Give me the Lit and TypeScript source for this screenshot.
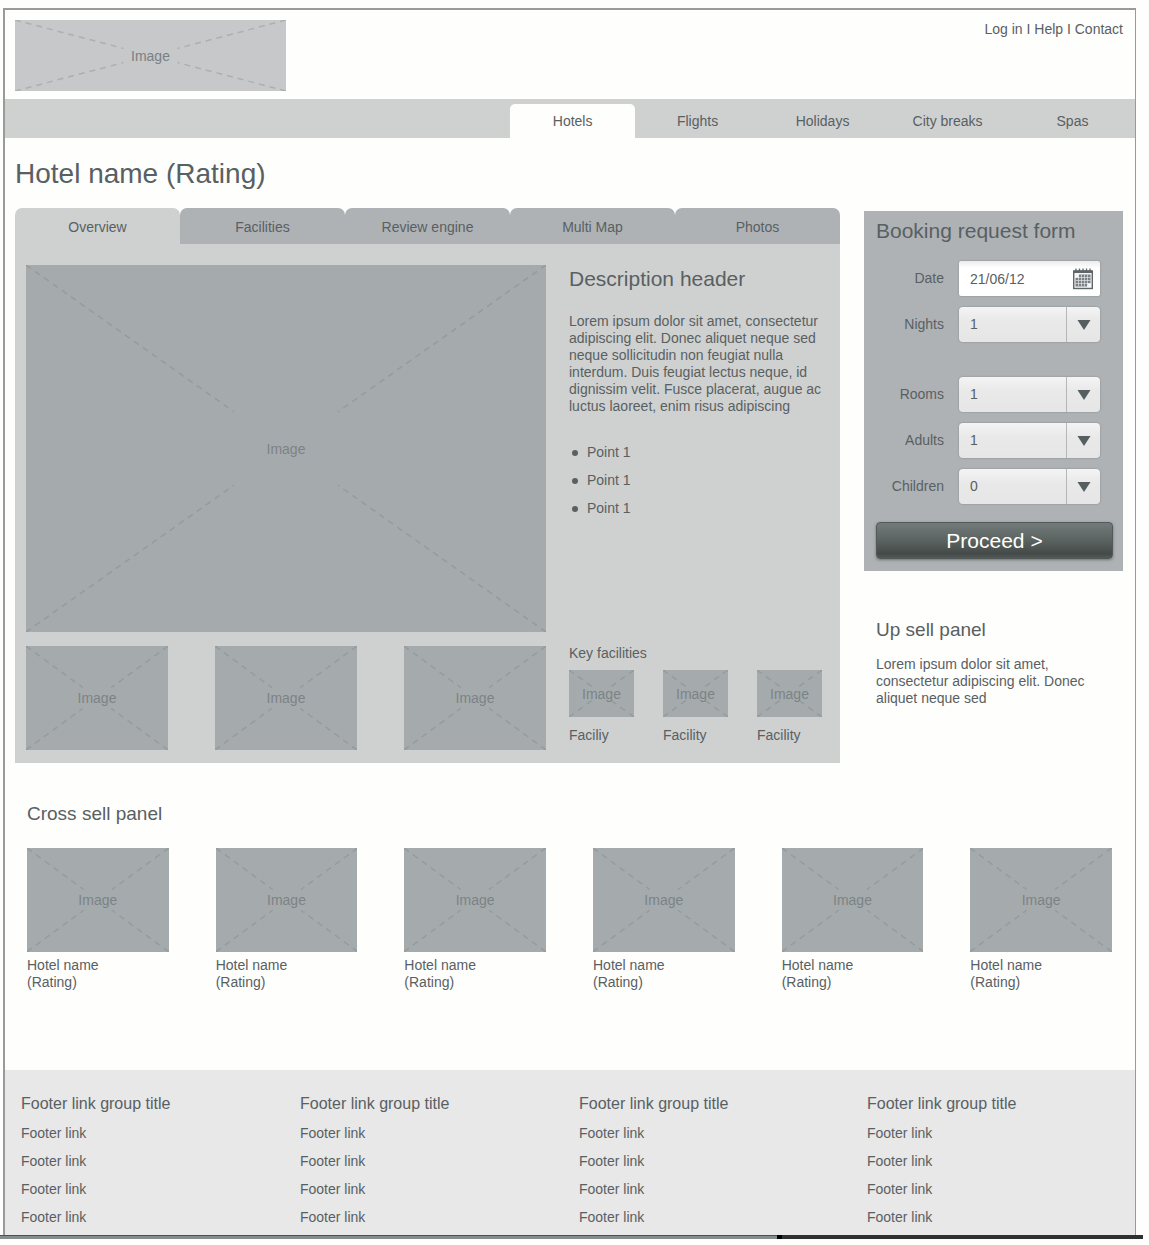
import { LitElement, html, css, svg } from "lit";
import { customElement, property } from "lit/decorators.js";
import { classMap } from "lit/directives/class-map.js";

/** Image placeholder: a flat box crossed by dashed diagonals, with a centred caption. */
@customElement("image-placeholder")
export class ImagePlaceholder extends LitElement {
  static styles = css`
    :host {
      display: grid;
      place-items: center;
      background: #a5abad;
      color: #7c8385;
      font-size: 14px;
      line-height: 16px;
    }
    :host([light]) {
      background: #c6c8ca;
      color: #7a8182;
    }
    .cross,
    .caption {
      grid-area: 1 / 1;
    }
    .cross {
      width: 100%;
      height: 100%;
      min-height: 0;
      display: block;
      overflow: hidden;
      contain: size;
    }
    .cross line {
      stroke: #959b9c;
      stroke-width: 1.5;
      stroke-dasharray: 6 5;
    }
    :host([light]) .cross line {
      stroke: #adafb0;
    }
  `;

  @property({ type: Boolean, reflect: true }) light = false;

  render() {
    const corners = [
      ["0%", "0%", "40%", "40%"],
      ["100%", "0%", "60%", "40%"],
      ["0%", "100%", "40%", "60%"],
      ["100%", "100%", "60%", "60%"],
    ];
    return html`
      <svg class="cross" aria-hidden="true">
        ${corners.map(
          ([x1, y1, x2, y2]) => svg`<line x1=${x1} y1=${y1} x2=${x2} y2=${y2}></line>`
        )}
      </svg>
      <span class="caption">Image</span>
    `;
  }
}

/** Booking form with date, stay length and party size. */
@customElement("booking-form")
export class BookingForm extends LitElement {
  static styles = css`
    :host {
      display: block;
      background: #aeb2b5;
      padding: 8px 10px 12px 12px;
    }
    .title {
      margin: 0 0 18px;
      font-size: 21px;
      line-height: 24px;
      font-weight: 400;
    }
    .fields {
      display: grid;
      gap: 11px;
      padding-right: 13px;
    }
    .field {
      display: grid;
      grid-template-columns: minmax(0, 1fr) 141px;
      column-gap: 15px;
      align-items: center;
    }
    .field.spaced {
      margin-top: 24px;
    }
    .label {
      text-align: right;
      font-size: 14px;
    }
    .control {
      display: grid;
      grid-template-columns: minmax(0, 1fr) 34px;
      height: 35px;
      border-radius: 4px;
      background: linear-gradient(#f4f4f4, #e9e9e9 40%, #e6e6e6);
      box-shadow: 0 0 2px #7c8182;
    }
    .control.date {
      border-radius: 2px;
      background: linear-gradient(#ececec, #ffffff 7px);
    }
    .input {
      grid-area: 1 / 1 / 2 / 3;
      box-sizing: border-box;
      width: 100%;
      height: 100%;
      margin: 0;
      padding: 0 36px 0 11px;
      border: 0;
      border-radius: inherit;
      background: transparent;
      appearance: none;
      font: inherit;
      font-size: 14px;
      color: inherit;
    }
    .mark {
      grid-area: 1 / 2;
      display: grid;
      place-items: center;
      pointer-events: none;
    }
    .mark.split {
      border-left: 1px solid #b4b6b7;
    }
    .proceed {
      display: block;
      width: 100%;
      height: 37px;
      margin: 18px 0 0;
      padding: 0;
      border: 1px solid #525958;
      border-radius: 4px;
      background: linear-gradient(#737b7a, #5b6361 50%, #434a48 88%, #535a59);
      box-shadow: 0 1px 3px #6c7273;
      color: #ffffff;
      font: inherit;
      font-size: 21px;
      line-height: 24px;
    }
  `;

  private selects = [
    { id: "nights", label: "Nights", value: "1", spaced: false },
    { id: "rooms", label: "Rooms", value: "1", spaced: true },
    { id: "adults", label: "Adults", value: "1", spaced: false },
    { id: "children", label: "Children", value: "0", spaced: false },
  ];

  private calendarIcon() {
    return html`
      <svg width="22" height="22" viewBox="0 0 22 22" aria-hidden="true">
        <rect x="1.700" y="3" width="18.600" height="17.500" fill="#f6f6f6" stroke="#5f6669" stroke-width="1.400" />
        <rect x="2" y="2.500" width="18" height="2.500" fill="#5f6669" />
        <path
          d="M4 0.500v4M7.500 0.500v4M11 0.500v4M14.500 0.500v4M18 0.500v4"
          stroke="#5f6669"
          stroke-width="1.300"
        />
        <path d="M7 6.500h11.500v8.500h-3.500v3.500h-11.500v-8.500h3.500z" fill="#7a8083" />
        <path
          d="M6.500 6.500v12M9.500 6.500v12M12.500 6.500v12M15.500 6.500v12M3.500 9.500h15M3.500 12.500h15M3.500 15.500h15"
          stroke="#e3e4e5"
          stroke-width="0.700"
        />
      </svg>
    `;
  }

  render() {
    return html`
      <form @submit=${(e: Event) => e.preventDefault()}>
        <h2 class="title">Booking request form</h2>
        <div class="fields">
          <div class="field">
            <label class="label" for="date">Date</label>
            <div class="control date">
              <input class="input" id="date" type="text" value="21/06/12" />
              <span class="mark">${this.calendarIcon()}</span>
            </div>
          </div>
          ${this.selects.map(
            (s) => html`
              <div class=${classMap({ field: true, spaced: s.spaced })}>
                <label class="label" for=${s.id}>${s.label}</label>
                <div class="control">
                  <select class="input" id=${s.id}>
                    <option>${s.value}</option>
                  </select>
                  <span class="mark split">
                    <svg width="14" height="10" viewBox="0 0 14 10" aria-hidden="true">
                      <path d="M0.500 0h13L7 10z" fill="#565e60" />
                    </svg>
                  </span>
                </div>
              </div>
            `
          )}
        </div>
        <button class="proceed" type="submit">Proceed &gt;</button>
      </form>
    `;
  }
}

@customElement("app-root")
export class AppRoot extends LitElement {
  static styles = css`
    :host {
      display: block;
      padding-top: 8px;
      background: #fefefd;
      color: #596062;
      font-family: "Liberation Sans", Arial, Helvetica, sans-serif;
      font-size: 14px;
      line-height: 17px;
    }
    a {
      color: inherit;
      text-decoration: none;
    }
    h1,
    h2,
    h3,
    p,
    ul {
      margin: 0;
      padding: 0;
      font-weight: 400;
    }
    ul {
      list-style: none;
    }
    .page {
      margin: 0 13px 0 3px;
      border: solid #999b9b;
      border-width: 2px 1px 0 2px;
    }
    .header {
      display: flex;
      justify-content: space-between;
      align-items: flex-start;
      padding: 10px 12px 8px 10px;
    }
    .logo {
      width: 271px;
      height: 71px;
    }
    .account {
      padding-top: 1px;
    }
    .nav {
      display: flex;
      justify-content: flex-end;
      background: #cfd1d0;
      padding-top: 5px;
    }
    .nav-list {
      display: grid;
      grid-template-columns: repeat(5, minmax(0, 1fr));
      width: 55.3%;
    }
    .nav-link {
      display: block;
      text-align: center;
      line-height: 34px;
      border-radius: 5px 5px 0 0;
    }
    .nav-link.active {
      background: #fefefd;
    }
    .title {
      padding: 20px 10px 18px;
      font-size: 28px;
      line-height: 32px;
    }
    .main {
      display: grid;
      grid-template-columns: minmax(0, 1fr) 259px;
      column-gap: 24px;
      align-items: start;
      padding: 0 12px 0 10px;
    }
    .tabs {
      display: grid;
      grid-template-columns: repeat(5, minmax(0, 1fr));
    }
    .tab {
      height: 36px;
      padding: 2px 0 0;
      border: 0;
      border-radius: 7px 7px 0 0;
      background: #aeb2b5;
      color: inherit;
      font: inherit;
    }
    .tab.active {
      background: #cfd1d0;
    }
    .panel {
      display: grid;
      grid-template-columns: minmax(0, 520fr) minmax(0, 260fr);
      column-gap: 23px;
      padding: 21px 11px 13px;
      background: #cfd1d0;
    }
    .gallery {
      display: grid;
      row-gap: 14px;
    }
    .hero {
      aspect-ratio: 520 / 367;
    }
    .thumbs {
      display: grid;
      grid-template-columns: repeat(3, minmax(0, 1fr));
      column-gap: 47px;
    }
    .thumb {
      aspect-ratio: 142 / 104;
    }
    .details {
      display: flex;
      flex-direction: column;
    }
    .details-title {
      font-size: 21px;
      line-height: 24px;
      padding: 2px 0 22px;
    }
    .points {
      display: grid;
      row-gap: 11px;
      padding-top: 29px;
    }
    .point {
      display: flex;
      align-items: center;
      gap: 9px;
      padding-left: 3px;
    }
    .dot {
      width: 6px;
      height: 6px;
      border-radius: 50%;
      background: #596062;
    }
    .facilities {
      margin-top: auto;
      padding-bottom: 6px;
    }
    .facilities-title {
      font-size: 14px;
    }
    .facility-list {
      display: grid;
      grid-template-columns: repeat(3, 65px);
      column-gap: 29px;
      padding-top: 8px;
    }
    .facility-image {
      height: 47px;
      margin-bottom: 10px;
    }
    .side {
      padding-top: 3px;
    }
    .upsell {
      padding: 48px 12px 0;
    }
    .section-title {
      font-size: 19px;
      line-height: 22px;
    }
    .upsell .section-title {
      padding-bottom: 15px;
    }
    .cross-sell {
      padding: 40px 23px 79px 22px;
    }
    .hotels {
      display: grid;
      grid-template-columns: repeat(6, minmax(0, 1fr));
      column-gap: 47px;
      padding-top: 23px;
    }
    .hotel-image {
      aspect-ratio: 142 / 104;
      margin-bottom: 5px;
    }
    .hotel-name {
      display: block;
    }
    .footer {
      display: grid;
      grid-template-columns: 279fr 279fr 288fr 268fr;
      padding: 24px 0 9px 16px;
      background: #e8e8e8;
    }
    .footer-title {
      font-size: 16px;
      line-height: 20px;
    }
    .footer-links {
      display: grid;
      row-gap: 11px;
      padding-top: 11px;
    }
    .edge {
      display: grid;
      grid-template-columns: 777fr 366fr;
      height: 4px;
      margin-right: 6px;
    }
    .edge-light {
      background: linear-gradient(#4c5254 1px, #868b8e 1px);
    }
    .edge-dark {
      border-left: 5px solid #000000;
      background: #2f3131;
    }
    .below {
      height: 6px;
    }
  `;

  private nav = ["Hotels", "Flights", "Holidays", "City breaks", "Spas"];
  private tabs = ["Overview", "Facilities", "Review engine", "Multi Map", "Photos"];
  private facilities = ["Faciliy", "Facility", "Facility"];

  render() {
    return html`
      <div class="page">
        <header class="header">
          <image-placeholder class="logo" light></image-placeholder>
          <div class="account"><a href="#">Log in</a> I <a href="#">Help</a> I <a href="#">Contact</a></div>
        </header>
        <nav class="nav">
          <div class="nav-list">
            ${this.nav.map(
              (n, i) => html`<a href="#" class=${classMap({ "nav-link": true, active: i === 0 })}>${n}</a>`
            )}
          </div>
        </nav>
        <h1 class="title">Hotel name (Rating)</h1>
        <main class="main">
          <section>
            <div class="tabs" role="tablist">
              ${this.tabs.map(
                (t, i) => html`<button
                  type="button"
                  role="tab"
                  aria-selected=${i === 0 ? "true" : "false"}
                  class=${classMap({ tab: true, active: i === 0 })}
                >${t}</button>`
              )}
            </div>
            <div class="panel" role="tabpanel">
              <div class="gallery">
                <image-placeholder class="hero"></image-placeholder>
                <div class="thumbs">
                  ${[0, 1, 2].map(() => html`<image-placeholder class="thumb"></image-placeholder>`)}
                </div>
              </div>
              <div class="details">
                <h2 class="details-title">Description header</h2>
                <p>
                  Lorem ipsum dolor sit amet, consectetur adipiscing elit. Donec aliquet neque sed
                  neque sollicitudin non feugiat nulla interdum. Duis feugiat lectus neque, id
                  dignissim velit. Fusce placerat, augue ac luctus laoreet, enim risus adipiscing
                </p>
                <ul class="points">
                  ${[0, 1, 2].map(() => html`<li class="point"><span class="dot"></span>Point 1</li>`)}
                </ul>
                <div class="facilities">
                  <h3 class="facilities-title">Key facilities</h3>
                  <div class="facility-list">
                    ${this.facilities.map(
                      (f) => html`<div>
                        <image-placeholder class="facility-image"></image-placeholder>
                        <span>${f}</span>
                      </div>`
                    )}
                  </div>
                </div>
              </div>
            </div>
          </section>
          <aside class="side">
            <booking-form></booking-form>
            <section class="upsell">
              <h2 class="section-title">Up sell panel</h2>
              <p>Lorem ipsum dolor sit amet, consectetur adipiscing elit. Donec aliquet neque sed</p>
            </section>
          </aside>
        </main>
        <section class="cross-sell">
          <h2 class="section-title">Cross sell panel</h2>
          <div class="hotels">
            ${[0, 1, 2, 3, 4, 5].map(
              () => html`<div>
                <image-placeholder class="hotel-image"></image-placeholder>
                <span class="hotel-name">Hotel name</span>
                <span class="hotel-name">(Rating)</span>
              </div>`
            )}
          </div>
        </section>
        <footer class="footer">
          ${[0, 1, 2, 3].map(
            () => html`<div>
              <h3 class="footer-title">Footer link group title</h3>
              <ul class="footer-links">
                ${[0, 1, 2, 3].map(() => html`<li><a href="#">Footer link</a></li>`)}
              </ul>
            </div>`
          )}
        </footer>
      </div>
      <div class="edge"><div class="edge-light"></div><div class="edge-dark"></div></div>
      <div class="below"></div>
    `;
  }
}
